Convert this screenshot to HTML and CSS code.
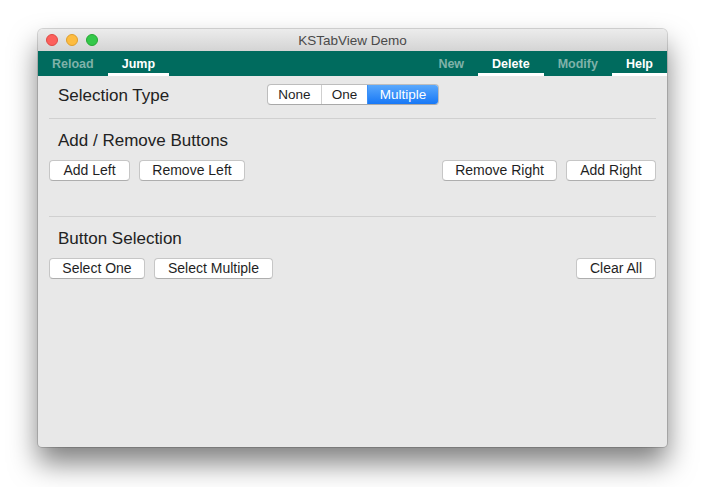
FILE: index.html
```html
<!DOCTYPE html>
<html>
<head>
<meta charset="utf-8">
<link rel="stylesheet" href="styles.css">
</head>
<body>
<div class="window">
  <div class="titlebar">
    <div class="lights">
      <span class="light red"></span>
      <span class="light yellow"></span>
      <span class="light green"></span>
    </div>
    <div class="title">KSTabView Demo</div>
    <div></div>
  </div>
  <div class="tabbar">
    <div class="tabs">
      <div class="tab">Reload</div>
      <div class="tab active">Jump</div>
    </div>
    <div class="tabs">
      <div class="tab">New</div>
      <div class="tab active">Delete</div>
      <div class="tab">Modify</div>
      <div class="tab active">Help</div>
    </div>
  </div>
  <div class="content">
    <div class="sel-row">
      <div class="heading sel-label">Selection Type</div>
      <div class="segmented">
        <div class="seg seg-none">None</div>
        <div class="seg seg-one">One</div>
        <div class="seg seg-multi selected">Multiple</div>
      </div>
    </div>
    <div class="sep"></div>
    <div class="heading">Add / Remove Buttons</div>
    <div class="btn-row">
      <div class="group">
        <div class="btn b-add-left">Add Left</div>
        <div class="btn b-remove-left">Remove Left</div>
      </div>
      <div class="group">
        <div class="btn b-remove-right">Remove Right</div>
        <div class="btn b-add-right">Add Right</div>
      </div>
    </div>
    <div class="sep sep-lower"></div>
    <div class="heading">Button Selection</div>
    <div class="btn-row">
      <div class="group">
        <div class="btn b-select-one">Select One</div>
        <div class="btn b-select-multi">Select Multiple</div>
      </div>
      <div class="group">
        <div class="btn b-clear">Clear All</div>
      </div>
    </div>
  </div>
</div>
</body>
</html>
```

FILE: styles.css
```css
html {
  margin: 0;
  padding: 0;
  background: #ffffff;
  height: 100%;
}
body {
  margin: 0;
  box-sizing: border-box;
  min-height: 100%;
  padding: 29px 0 40px 38px;
  font-family: "Liberation Sans", Arial, sans-serif;
  background: #ffffff;
}
.window {
  width: 629px;
  height: 418px;
  background: #e8e8e8;
  border-radius: 5px 5px 4px 4px;
  box-shadow: 0 16px 28px rgba(0,0,0,0.5), 0 0 0 1px rgba(0,0,0,0.15);
  overflow: hidden;
  display: flex;
  flex-direction: column;
}
.titlebar {
  height: 22px;
  flex: none;
  background: linear-gradient(#ececec, #d4d4d4);
  display: grid;
  grid-template-columns: 1fr auto 1fr;
  align-items: center;
}
.lights {
  display: flex;
  gap: 8px;
  padding-left: 8px;
}
.light {
  width: 12px;
  height: 12px;
  border-radius: 50%;
  box-sizing: border-box;
}
.red { background: #fc605c; border: 0.5px solid #de4a45; }
.yellow { background: #fdbc40; border: 0.5px solid #de9f2c; }
.green { background: #34c84a; border: 0.5px solid #27a934; }
.title {
  font-size: 13.5px;
  color: #4a4a4a;
}
.tabbar {
  height: 25px;
  flex: none;
  background: #006b5e;
  display: flex;
  justify-content: space-between;
}
.tabs {
  display: flex;
}
.tab {
  padding: 0 14px;
  height: 25px;
  box-sizing: border-box;
  border-bottom: 3px solid transparent;
  font-size: 12.5px;
  font-weight: bold;
  color: #7fb2a9;
  line-height: 26px;
}
.tab.active {
  color: #ffffff;
  border-bottom-color: #ffffff;
}
.content {
  padding: 8px 11px 0;
  display: flex;
  flex-direction: column;
}
.heading {
  font-size: 17px;
  color: #222222;
  padding-left: 9px;
  height: 20px;
  line-height: 22px;
}
.sel-row {
  display: flex;
  align-items: center;
  height: 21px;
}
.sel-label {
  width: 209px;
  flex: none;
}
.segmented {
  display: flex;
  height: 21px;
  box-sizing: border-box;
  border: 1px solid #bdbdbd;
  border-bottom-color: #a9a9a9;
  border-radius: 4px;
  background: #ffffff;
  overflow: hidden;
}
.seg {
  font-size: 13.5px;
  color: #1f1f1f;
  line-height: 19px;
  text-align: center;
  border-left: 1px solid #cfcfcf;
}
.seg-none { width: 53px; border-left: none; }
.seg-one { width: 45px; }
.seg-multi { width: 70px; }
.seg.selected {
  background: linear-gradient(#5aa8fc, #1778f6);
  color: #ffffff;
  border-left-color: #3a8ff8;
}
.sep {
  height: 1px;
  background: #d0d0d0;
  margin: 13px 0 11px;
}
.sep-lower {
  margin-top: 35px;
}
.btn-row {
  display: flex;
  justify-content: space-between;
  margin-top: 10px;
}
.group {
  display: flex;
  gap: 9px;
}
.btn {
  height: 21px;
  box-sizing: border-box;
  background: #ffffff;
  border: 1px solid #c6c6c6;
  border-bottom-color: #aeaeae;
  border-radius: 4px;
  font-size: 14px;
  color: #1f1f1f;
  line-height: 19px;
  text-align: center;
}
.b-add-left { width: 81px; }
.b-remove-left { width: 106px; }
.b-remove-right { width: 115px; }
.b-add-right { width: 90px; }
.b-select-one { width: 96px; }
.b-select-multi { width: 119px; }
.b-clear { width: 80px; }
```
